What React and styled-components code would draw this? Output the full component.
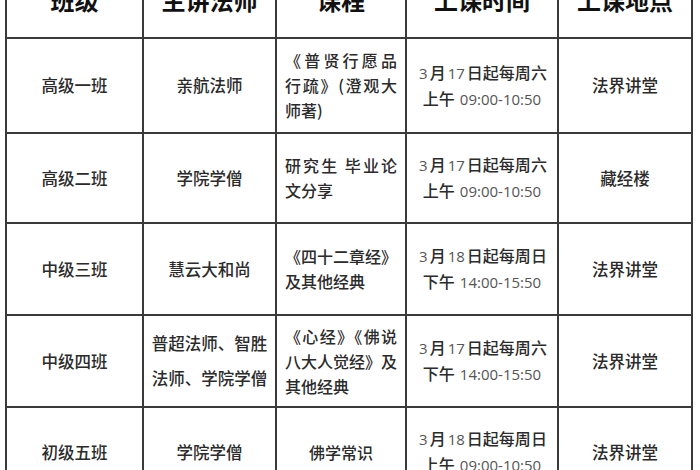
import React from "react";
import styled, { createGlobalStyle } from "styled-components";

const Global = createGlobalStyle`
  html, body {
    margin: 0;
    padding: 0;
    background: #fff;
    overflow: hidden;
  }
  body {
    font-family: "Noto Sans CJK SC", "Noto Sans", sans-serif;
    color: #2b2b2b;
  }
`;

const Table = styled.div`
  display: grid;
  grid-template-columns: 135px 131px 128px 150px 132px;
  grid-template-rows: 75px 93px 88px 90px 90px 88px;
  gap: 2px;
  padding: 2px;
  width: fit-content;
  margin: -40px 0 0 5px;
  background: #3a3a3a;
`;

const Cell = styled.div`
  background: #fff;
  display: flex;
  flex-direction: column;
  justify-content: center;
  align-items: ${({ $left }) => ($left ? "stretch" : "center")};
  text-align: ${({ $left }) => ($left ? "left" : "center")};
  padding: ${({ $left }) => ($left ? "0 8px" : "0")};
  font-size: ${({ $small }) => ($small ? "16px" : "16.5px")};
  font-weight: 500;
  line-height: ${({ $tall }) => ($tall ? "35px" : "25px")};
  color: #2b2b2b;
`;

const Head = styled(Cell)`
  font-size: 24px;
  font-weight: 700;
  color: #111;
`;

const Line = styled.div`
  white-space: nowrap;
  text-align-last: ${({ $justify }) => ($justify ? "justify" : "auto")};
`;

const Num = styled.span`
  font-family: "Open Sans", sans-serif;
  font-size: 15px;
  font-weight: 400;
  color: #555;
  margin: 0 2px;
`;

const Clock = styled.span`
  font-family: "Open Sans", sans-serif;
  font-size: 15px;
  font-weight: 400;
  color: #555;
  margin-left: 5px;
`;

const rows = [
  {
    cls: "高级一班",
    teacher: ["亲航法师"],
    course: [["《普贤行愿品", true], ["行疏》(澄观大", true], ["师著)", false]],
    date: ["3", "17", "六"],
    half: "上午",
    time: "09:00-10:50",
    place: "法界讲堂",
  },
  {
    cls: "高级二班",
    teacher: ["学院学僧"],
    course: [["研究生 毕业论", true], ["文分享", false]],
    date: ["3", "17", "六"],
    half: "上午",
    time: "09:00-10:50",
    place: "藏经楼",
  },
  {
    cls: "中级三班",
    teacher: ["慧云大和尚"],
    course: [["《四十二章经》", true], ["及其他经典", false]],
    date: ["3", "18", "日"],
    half: "下午",
    time: "14:00-15:50",
    place: "法界讲堂",
  },
  {
    cls: "中级四班",
    teacher: ["普超法师、智胜", "法师、学院学僧"],
    course: [["《心经》《佛说", true], ["八大人觉经》及", true], ["其他经典", false]],
    date: ["3", "17", "六"],
    half: "下午",
    time: "14:00-15:50",
    place: "法界讲堂",
  },
  {
    cls: "初级五班",
    teacher: ["学院学僧"],
    course: "佛学常识",
    date: ["3", "18", "日"],
    half: "上午",
    time: "09:00-10:50",
    place: "法界讲堂",
  },
];

const headers = ["班级", "主讲法师", "课程", "上课时间", "上课地点"];

export default function App() {
  return (
    <>
      <Global />
      <Table>
        {headers.map((h) => (
          <Head key={h}>{h}</Head>
        ))}
        {rows.map((r) => (
          <React.Fragment key={r.cls}>
            <Cell>{r.cls}</Cell>
            <Cell $tall={r.teacher.length > 1}>
              {r.teacher.map((t) => (
                <Line key={t}>{t}</Line>
              ))}
            </Cell>
            {typeof r.course === "string" ? (
              <Cell $small>{r.course}</Cell>
            ) : (
              <Cell $left $small>
                {r.course.map(([t, j]) => (
                  <Line key={t} $justify={j}>
                    {t}
                  </Line>
                ))}
              </Cell>
            )}
            <Cell $small>
              <Line>
                <Num>{r.date[0]}</Num>月<Num>{r.date[1]}</Num>日起每周{r.date[2]}
              </Line>
              <Line>
                {r.half}
                <Clock>{r.time}</Clock>
              </Line>
            </Cell>
            <Cell>{r.place}</Cell>
          </React.Fragment>
        ))}
      </Table>
    </>
  );
}
